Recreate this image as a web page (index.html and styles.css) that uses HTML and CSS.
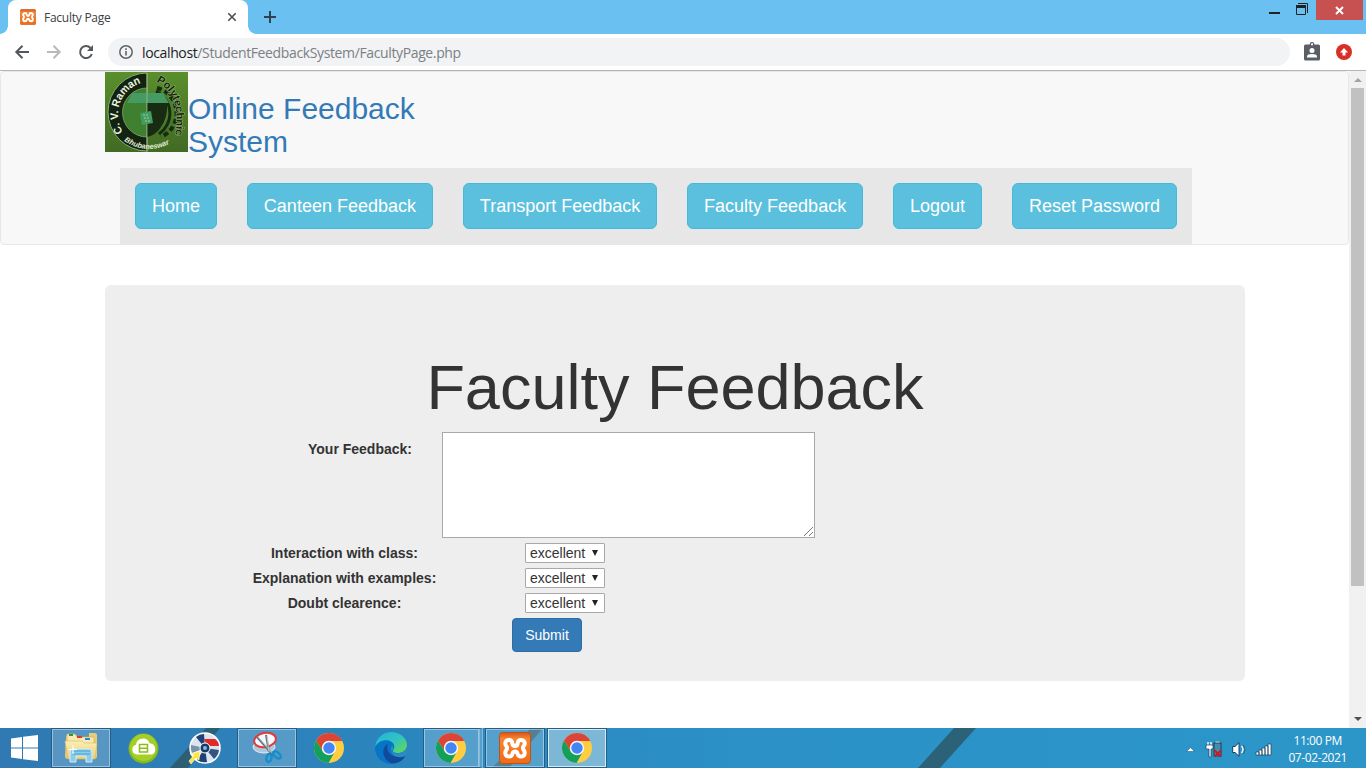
FILE: index.html
```html
<!DOCTYPE html>
<html lang="en">
<head>
<meta charset="utf-8">
<title>Faculty Page</title>
<link rel="stylesheet" href="styles.css">
</head>
<body>
<svg class="defs" width="0" height="0" aria-hidden="true">
  <defs>
    <linearGradient id="orange" x1="0" y1="0" x2="0" y2="1"><stop offset="0" stop-color="#d9541a"/><stop offset=".2" stop-color="#f9852d"/><stop offset="1" stop-color="#f06a14"/></linearGradient>
    <linearGradient id="edgeTop" x1="0" y1="0" x2="1" y2="1"><stop offset="0" stop-color="#24b2df"/><stop offset=".5" stop-color="#2fc3c5"/><stop offset="1" stop-color="#68dc48"/></linearGradient>
    <linearGradient id="folder" x1="0" y1="0" x2="0" y2="1"><stop offset="0" stop-color="#fbefb5"/><stop offset="1" stop-color="#edcc74"/></linearGradient>
    <symbol id="chrome" viewBox="0 0 30 30">
      <circle cx="15" cy="15" r="15" fill="#ffcd42"/>
      <path d="M2 7.6A15 15 0 0 1 28.3 8H15a7 7 0 0 0-6.1 10.5z" fill="#db4437"/>
      <path d="M2 7.5A15 15 0 0 0 14.5 30L21 18.6a7 7 0 0 1-12.1-.1z" fill="#12a05c"/>
      <circle cx="15" cy="15" r="7.2" fill="#f5f5f5"/><circle cx="15" cy="15" r="5.7" fill="#4285f4"/>
    </symbol>
    <symbol id="xampp" viewBox="0 0 32 32">
      <rect x=".5" y=".5" width="31" height="31" rx="3" fill="url(#orange)" stroke="#b8541d"/>
      <path d="M10 8C6 8 5.500 12 7.300 14Q8.800 16 7.300 18C5.500 20.500 6 24.500 10 24.500Q13 24.500 13.500 21.500Q14 19.500 16 19.500Q18 19.500 18.500 21.500Q19 24.500 22 24.500C26 24.500 26.500 20.500 24.700 18Q23.200 16 24.700 14C26.500 12 26 8 22 8Q19 8 18.700 11Q18.500 14 16 14Q13.500 14 13.300 11Q13 8 10 8z" fill="none" stroke="#fff" stroke-width="4" stroke-linejoin="round"/>
    </symbol>
  </defs>
</svg>

<header class="tabstrip">
  <div class="tab">
    <svg class="favicon" width="16" height="16"><use href="#xampp"/></svg>
    <span class="tab-title">Faculty Page</span>
    <svg class="tab-close" width="8" height="8" viewBox="0 0 8 8"><path d="M.3.3l7.400 7.400M7.700.3L.3 7.700" stroke="#4a4d51" stroke-width="1.600"/></svg>
  </div>
  <svg class="new-tab" width="12" height="12" viewBox="0 0 12 12"><path d="M6 0v12M0 6h12" stroke="#2f4050" stroke-width="2"/></svg>
  <div class="window-buttons">
    <svg class="min" width="11" height="2"><path d="M0 1h11" stroke="#222" stroke-width="2"/></svg>
    <svg class="max" width="12" height="12" viewBox="0 0 12 12"><path d="M2 .5h9.500V10" fill="none" stroke="#222"/><path d="M.5 4v7.500h9V4" fill="none" stroke="#222"/><path d="M0 2h10v3H0z" fill="#222"/></svg>
    <div class="close"><svg width="9" height="7" viewBox="0 0 9 7"><path d="M1 0l7 7M8 0L1 7" stroke="#fff" stroke-width="2"/></svg></div>
  </div>
</header>

<div class="toolbar">
  <svg width="14" height="14" viewBox="0 0 14 14" fill="none" stroke="#54585c" stroke-width="2"><path d="M14 7H1.500M7.500.7L1.300 7l6.200 6.300"/></svg>
  <svg width="14" height="14" viewBox="0 0 14 14" fill="none" stroke="#b7b9bb" stroke-width="2"><path d="M0 7h12.500M6.500.7L12.700 7l-6.200 6.300"/></svg>
  <svg width="14" height="14" viewBox="0 0 14 14"><path d="M12.800 9A6 6 0 1 1 11.500 3" fill="none" stroke="#54585c" stroke-width="2"/><path d="M14 0v6H8z" fill="#54585c"/></svg>
  <div class="omnibox">
    <svg width="14" height="14" viewBox="0 0 14 14"><circle cx="7" cy="7" r="6.200" fill="none" stroke="#5f6368" stroke-width="1.500"/><path d="M7 6v4.500M7 3.300v1.700" stroke="#5f6368" stroke-width="1.600"/></svg>
    <span class="url"><b>localhost</b>/StudentFeedbackSystem/FacultyPage.php</span>
  </div>
  <svg class="badge" width="16" height="19" viewBox="0 0 16 19"><circle cx="8" cy="2.500" r="1.800" fill="#fff" stroke="#5a5f65" stroke-width="1.200"/><rect y="2.500" width="16" height="16" rx="1.500" fill="#5a5f65"/><circle cx="8" cy="2.500" r=".9" fill="#fff"/><circle cx="8" cy="8.500" r="2.500" fill="#fff"/><path d="M3 15.500v-1.300c0-3 10-3 10 0v1.300z" fill="#fff"/></svg>
  <svg class="update" width="16" height="16" viewBox="0 0 16 16"><circle cx="8" cy="8" r="8" fill="#d93025"/><path d="M8 4L4 8.500h2.500V11.500h3V8.500H12z" fill="#fff"/></svg>
</div>

<div class="viewport">
  <main class="page">
    <nav class="navbar">
      <div class="brand">
        <svg class="seal" width="83" height="80" viewBox="0 0 83 80">
          <defs>
            <linearGradient id="grass" x1="0" y1="0" x2="0" y2="1"><stop offset="0" stop-color="#598f2c"/><stop offset="1" stop-color="#426a24"/></linearGradient>
            <path id="arcLeft" d="M18 60A33 33 0 0 1 40 10"/>
            <path id="arcRight" d="M51 10Q77 22 70 64"/>
            <path id="arcBottom" d="M19 69Q42 84 66 71"/>
          </defs>
          <rect width="83" height="80" fill="url(#grass)"/>
          <path d="M42 1a39 39 0 0 0 0 78z" fill="#132312" stroke="#8baa70"/>
          <path d="M42 16a24 24 0 0 0 0 49z" fill="#3f8030" stroke="#91ad79" stroke-width=".7"/>
          <path d="M52 16a26 26 0 0 1 4 49" fill="none" stroke="#162c12" stroke-width="4" stroke-dasharray="5 3"/>
          <path d="M51 19a25 25 0 0 1 3 43" fill="none" stroke="#162c12" stroke-width="3"/>
          <path d="M22 31l5-10h31l6 10z" fill="#459b63"/>
          <path d="M42 31h20q1 14-6 24-5 8-14 10z" fill="#172c13"/>
          <path d="M42 1v79" stroke="#a6bd8f" stroke-width=".7"/>
          <path d="M35 41l11-2 2 12-11 2z" fill="#459c62"/><path d="M38 43h6M39 46h5M40 49h5" stroke="#9cd09f" stroke-dasharray="2 1"/>
          <g class="seal-text">
            <text font-size="11" fill="#e9f1df"><textPath href="#arcLeft" textLength="60" lengthAdjust="spacingAndGlyphs">C. V. Raman</textPath></text>
            <text class="dark-letters" font-size="11"><textPath href="#arcRight" textLength="61" lengthAdjust="spacingAndGlyphs">Polytechnic</textPath></text>
            <text font-size="7.500" fill="#e0ecd6" font-style="italic"><textPath href="#arcBottom" textLength="48" lengthAdjust="spacingAndGlyphs">Bhubaneswar</textPath></text>
          </g>
        </svg>
        <h2>Online Feedback<br>System</h2>
      </div>
      <div class="menu">
        <a>Home</a><a>Canteen Feedback</a><a>Transport Feedback</a><a>Faculty Feedback</a><a>Logout</a><a>Reset Password</a>
      </div>
    </nav>
    <section class="jumbotron">
      <h1>Faculty Feedback</h1>
      <form>
        <div class="row comment"><label>Your Feedback:</label><div class="textarea"><svg width="9" height="9" viewBox="0 0 9 9"><path d="M0 9L9 0M5 9l4-4" stroke="#777"/></svg></div></div>
        <div class="row"><label>Interaction with class:</label><div class="select">excellent<i></i></div></div>
        <div class="row"><label>Explanation with examples:</label><div class="select">excellent<i></i></div></div>
        <div class="row"><label>Doubt clearence:</label><div class="select">excellent<i></i></div></div>
        <button type="button" class="submit">Submit</button>
      </form>
    </section>
  </main>
  <div class="scrollbar">
    <svg width="8" height="4"><path d="M0 4l4-4 4 4z" fill="#a3a3a3"/></svg>
    <div class="thumb"></div>
    <svg width="8" height="4"><path d="M0 0h8L4 4z" fill="#505050"/></svg>
  </div>
</div>

<footer class="taskbar">
  <div class="start"><svg width="27" height="26" viewBox="0 0 27 26" fill="#fff"><path d="M0 3.500L11 2v10.500H0zM12 1.800L27 0v12.500H12zM0 13.500h11V24L0 22.500zM12 13.500h15V26l-15-1.800z"/></svg></div>
  <div class="task open"><svg width="34" height="32" viewBox="0 0 34 32"><path d="M2 5q0-2 2-2h8l2 2h11V1h6q2 0 2 2v21q0 3-3 3H4q-3 0-3-3z" fill="#eacb77"/><path d="M3 2h8l2 3h17v10H3z" fill="#f8eab1" stroke="#d0a950" stroke-width=".6"/><path d="M5 2h4v2H5z" fill="#17a04a"/><path d="M13 4h5v2h-5z" fill="#d93b31"/><path d="M21 6h5v2h-5z" fill="#238bd0"/><path d="M1 9h17l2 2h13l-2 16H4z" fill="url(#folder)" stroke="#dab765" stroke-width=".6"/><path d="M6 30V20q0-3 3-3h16q3 0 3 3v10h-6v-6H12v6z" fill="#8acce9" stroke="#c9f1fc"/><path d="M8 19h18M8 22h18" stroke="#4aa0d0"/><path d="M9 13v9M5 17.500h8" stroke="#fff" stroke-width="1.200"/></svg></div>
  <div class="task"><svg width="31" height="31" viewBox="0 0 31 31"><circle cx="15.500" cy="15.500" r="15" fill="#87b91c"/><circle cx="15.500" cy="14.500" r="13.500" fill="#a4cf26"/><path d="M9 21.500a5 5 0 0 1-1-9.800 7 7 0 0 1 13.500-1.500 6 6 0 0 1 2.500 11.300z" fill="#fff"/><path d="M11.500 11.500h8v7.500h-8zM11.500 15.300h8" fill="none" stroke="#8cbd17" stroke-width="1.500"/></svg></div>
  <div class="task"><svg width="32" height="32" viewBox="0 0 32 32"><circle cx="16" cy="16" r="15" fill="#dce4ed" stroke="#fff" stroke-width="1.500"/><path d="M16 16L15 2A14 14 0 0 0 7 5z" fill="#1e4276"/><path d="M16 16L2 13A14 14 0 0 0 3 21z" fill="#7893ac"/><path d="M16 16L8 28A14 14 0 0 0 18 30z" fill="#1e4276"/><path d="M16 16L25 27A14 14 0 0 0 30 18z" fill="#335681"/><path d="M15 7h11q4 3 4 7H18z" fill="#e12928"/><circle cx="16" cy="16" r="5" fill="#173a67" stroke="#fff"/><circle cx="16" cy="16" r="2" fill="#83b9e0"/><path d="M11 19l-1 9-3-2-5 6-2-3 5-6-4-1z" fill="#ffe53b" stroke="#fff" stroke-width=".6"/></svg></div>
  <div class="task open"><svg width="32" height="32" viewBox="0 0 32 32"><ellipse cx="13" cy="15" rx="11" ry="6" fill="#adc9db" stroke="#e2ebf1"/><ellipse cx="14" cy="8" rx="11" ry="7" transform="rotate(-10 14 8)" fill="#f7f9fa" stroke="#e33a3b" stroke-width="2"/><path d="M6 5l16 18M15 3l3 17" stroke="#65727e" stroke-width="2"/><path d="M7 5l15 17M16 4l2 16" stroke="#cbd4da" stroke-width=".8"/><ellipse cx="18" cy="26" rx="2.500" ry="4" transform="rotate(15 18 26)" fill="none" stroke="#168dcd" stroke-width="2.500"/><ellipse cx="26" cy="23" rx="2.500" ry="4.500" transform="rotate(-50 26 23)" fill="none" stroke="#168dcd" stroke-width="2.500"/></svg></div>
  <div class="task"><svg width="30" height="30"><use href="#chrome"/></svg></div>
  <div class="task"><svg width="32" height="32" viewBox="0 0 32 32"><circle cx="16" cy="16" r="16" fill="#0874c7"/><path d="M0 15C1 6 8 0 16 0c10 0 16 7 16 13 0 6-5 8-9 8-4 0-5-1-5-2 0-2 2-2 1-6C17 7 5 6 0 15z" fill="url(#edgeTop)"/><path d="M13 12c-8 4-5 16 3 19 6 1 12-2 14-7q0-1-1-1c-6 4-14 1-16-4-1-3-1-5 0-7z" fill="#124999"/><path d="M17 13c3 4-1 5 1 7 3 3 10 1 13-3 2 0 2 3-1 7-8 4-17-2-13-11z" fill="#2a8cc4"/></svg></div>
  <div class="task open stack"><svg width="30" height="30"><use href="#chrome"/></svg></div>
  <div class="task open"><svg width="32" height="32"><use href="#xampp"/></svg></div>
  <div class="task open active"><svg width="30" height="30"><use href="#chrome"/></svg></div>
  <div class="tray">
    <svg width="9" height="5" viewBox="0 0 9 5"><path d="M.5 4.500L4.500.5l4 4z" fill="#fff" stroke="#174e70" stroke-width=".5"/></svg>
    <svg width="17" height="17" viewBox="0 0 17 17"><rect x="8" y="2" width="7" height="13" fill="#438fab" stroke="#183e56"/><path d="M9.500 0h4v2h-4z" fill="#8ba7b4"/><path d="M2 1v4M5 1v4" stroke="#fff" stroke-width="1.400"/><path d="M0 4h7v4H5v8H3V8H0z" fill="#fff" stroke="#173f59" stroke-width=".7"/><path d="M8.500 9.500l6.500 6M15 9.500l-6.500 6" stroke="#d8141d" stroke-width="2"/></svg>
    <svg width="14" height="15" viewBox="0 0 14 15"><path d="M.7 4.500H3L7 .7v13.600L3 10.500H.7z" fill="#fff" stroke="#173f59"/><path d="M9.500 4q3 3.500 0 7" fill="none" stroke="#fff" stroke-width="1.300"/><path d="M11.500 3q3 4.500 0 9" fill="none" stroke="#365f7b"/></svg>
    <svg width="17" height="13" viewBox="0 0 17 13"><path d="M1 9h3v3H1zM4 7h3v5H4zM7 5h3v7H7zM10 3h3v9h-3zM13 1h3v11h-3z" fill="#fff" stroke="#173f59" stroke-width=".7"/></svg>
    <div class="clock">11:00 PM<br>07-02-2021</div>
  </div>
</footer>
</body>
</html>
```
FILE: styles.css
```css
* { box-sizing: border-box; }
body { margin: 0; width: 1366px; height: 768px; overflow: hidden; display: flex; flex-direction: column; background: #fff; font-family: "Liberation Sans", Arial, sans-serif; color: #333; }
svg { display: block; flex: none; overflow: visible; }
.defs { position: absolute; }

.tabstrip { height: 34px; flex: none; display: flex; background: #6ac1f1; padding-left: 8px; }
.tab { width: 240px; height: 34px; display: flex; align-items: center; padding: 0 12px; background: #fff; border-radius: 8px 8px 0 0; position: relative; }
.tab::before, .tab::after { content: ""; position: absolute; bottom: 0; width: 8px; height: 8px; }
.tab::before { left: -8px; background: radial-gradient(circle at 0 0, transparent 7.500px, #fff 8px); }
.tab::after { right: -8px; background: radial-gradient(circle at 100% 0, transparent 7.500px, #fff 8px); }
.tab-title { font: 12px "Open Sans", sans-serif; letter-spacing: -.25px; color: #3c4043; margin-left: 8px; flex: 1; }
.new-tab { margin: 11px 0 0 16px; }
.window-buttons { margin-left: auto; display: flex; padding-right: 3px; }
.window-buttons .min { margin: 12px 16px 0 0; }
.window-buttons .max { margin: 3px 8px 0 0; }
.close { width: 47px; height: 20px; background: #c75050; display: flex; align-items: center; justify-content: center; }

.toolbar { height: 37px; flex: none; border-bottom: 1px solid #b4b5b6; display: flex; align-items: center; padding: 0 14px 0 15px; gap: 18px; }
.omnibox { flex: 1; height: 28px; border-radius: 14px; background: #f1f3f4; display: flex; align-items: center; gap: 9px; padding-left: 11px; margin-left: -3px; }
.url { font: 14px "Open Sans", sans-serif; letter-spacing: -.37px; color: #7c8084; white-space: nowrap; }
.url b { font-weight: 400; color: #202124; }
.badge { margin-left: -4px; margin-top: -1px; }
.update { margin-left: -2px; }

.viewport { height: 657px; flex: none; display: flex; }
.page { width: 1349px; height: 657px; }
.navbar { height: 174px; border: 1px solid #e7e7e7; border-radius: 4px; background: #f8f8f8; padding-left: 104px; }
.brand { display: flex; height: 96px; color: #337ab7; }
.brand h2 { margin: 20px 0 0; font-size: 30px; line-height: 33px; font-weight: 400; }
.seal-text { font-family: "Liberation Sans", Arial, sans-serif; font-weight: 700; }
.dark-letters { fill: #142510; stroke: #9dbb7b; stroke-width: 1px; paint-order: stroke; }
.menu { width: 1072px; height: 76px; margin-left: 15px; padding: 15px; background: #e7e7e7; display: flex; justify-content: space-between; }
.menu a { height: 46px; padding: 10px 16px; border: 1px solid #46b8da; border-radius: 6px; background: #5bc0de; color: #fff; font-size: 18px; line-height: 24px; white-space: nowrap; }

.jumbotron { width: 1140px; height: 396px; margin: 40px 0 0 105px; padding-top: 68px; border-radius: 6px; background: #eee; }
.jumbotron h1 { margin: 0; font-size: 63px; line-height: 69px; font-weight: 400; text-align: center; }
form { padding: 10px 0 0 137px; }
.row { height: 25px; display: flex; align-items: center; font-size: 14px; }
.row label { width: 205px; font-weight: 700; text-align: center; }
.row.comment { height: 106px; margin-bottom: 2px; align-items: flex-start; }
.comment label { width: 170px; text-align: right; padding-top: 9px; }
.textarea { width: 373px; height: 106px; margin-left: 30px; border: 1px solid #a9a9a9; background: #fff; display: flex; align-items: flex-end; justify-content: flex-end; padding: 1px; }
.select { width: 80px; height: 20px; margin-left: 78px; padding: 0 6px 0 4px; border: 1px solid #a9a9a9; border-radius: 1px; background: #fff; display: flex; align-items: center; justify-content: space-between; }
.select i { border: 3px solid transparent; border-top: 6px solid #222; border-bottom: 0; }
.submit { display: block; width: 70px; height: 34px; margin: 3px 0 0 270px; padding: 0; background: #337ab7; border: 1px solid #2e6da4; border-radius: 4px; color: #fff; font: 14px "Liberation Sans", Arial, sans-serif; }

.scrollbar { width: 17px; background: #f1f1f1; display: flex; flex-direction: column; align-items: center; padding: 7px 0; }
.thumb { width: 13px; height: 498px; margin: 6px 0 auto; background: #c1c1c1; }

.taskbar { height: 40px; flex: none; display: flex; gap: 2px; background: linear-gradient(90deg, #3079b2, #2b86be 30%, #2b91c6 55%, #2c96c9); position: relative; isolation: isolate; }
.taskbar::before { content: ""; position: absolute; inset: 0; z-index: -1; background: #2d5968; opacity: .85; clip-path: polygon(170px 100%, 206px 0, 220px 0, 188px 100%, 188px 100%, 492px 100%, 531px 0, 543px 0, 509px 100%, 918px 100%, 954px 0, 976px 0, 940px 100%); }
.start { width: 49px; display: flex; align-items: center; justify-content: center; }
.task { width: 60px; height: 40px; display: flex; align-items: center; justify-content: center; }
.open { background: rgba(255,255,255,.2); border: 1px solid #225e87; box-shadow: inset 0 0 0 1px rgba(255,255,255,.4); }
.stack { border-right: 4px double #87b8d8; }
.stack svg { margin-right: 2px; }
.active { background: rgba(225,237,239,.45); box-shadow: inset 0 0 0 1px rgba(255,255,255,.7); }
.tray { margin-left: auto; display: flex; align-items: center; padding: 2px 19px 0 0; gap: 9px; }
.tray > svg:first-child { margin-right: 2px; }
.clock { margin-left: 7px; text-align: center; color: #fff; font: 12px/17px "Open Sans", sans-serif; letter-spacing: -.4px; white-space: nowrap; }
```
